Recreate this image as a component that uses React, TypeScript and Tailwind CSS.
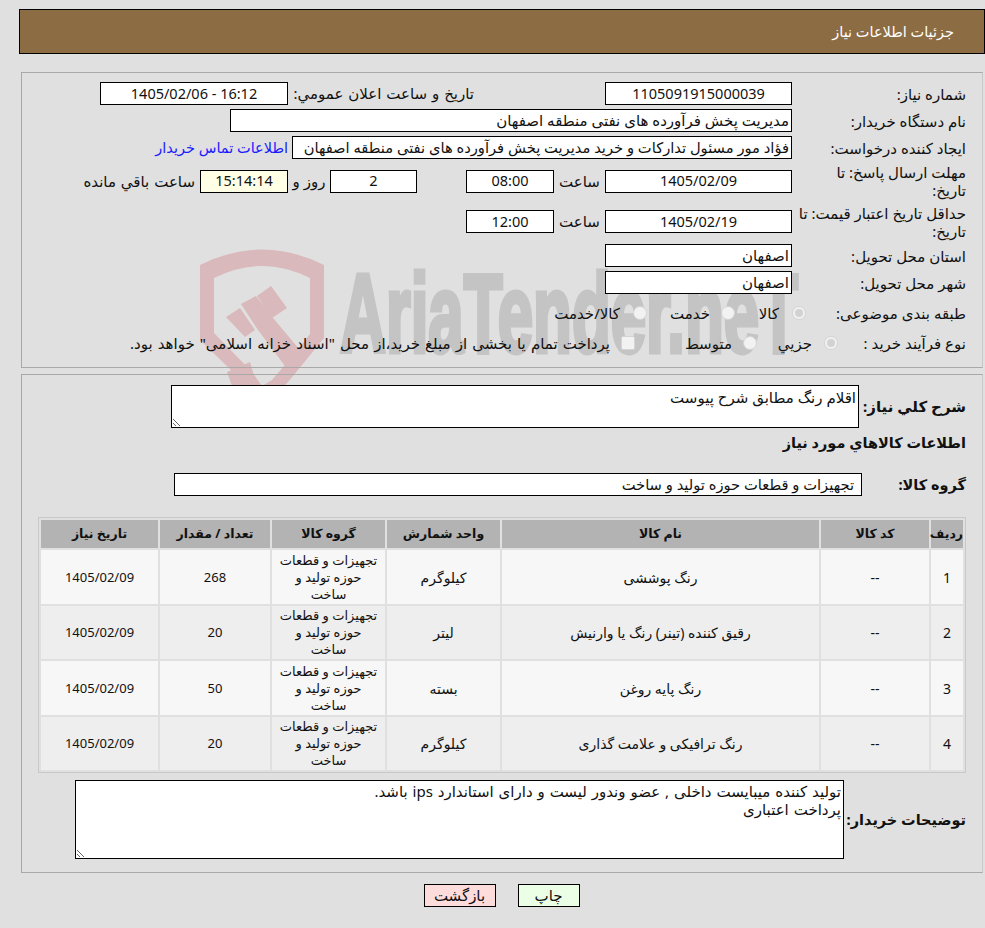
import React from "react";

function Field({ w, children, cls = "", bg = "bg-white" }: { w: string; children: React.ReactNode; cls?: string; bg?: string }) {
  return (
    <div className={`${w} ${bg} h-[23px] border border-black flex items-center px-[2px] overflow-hidden whitespace-nowrap shrink-0 ${cls}`}>
      {children}
    </div>
  );
}

function Num({ w, children, bg }: { w: string; children: React.ReactNode; bg?: string }) {
  return (
    <Field w={w} bg={bg} cls="justify-center text-[14.5px]">
      <span dir="ltr">{children}</span>
    </Field>
  );
}

function Label({ children, w = "w-[174px]" }: { children: React.ReactNode; w?: string }) {
  return <div className={`${w} shrink-0 leading-[18px] whitespace-nowrap`}>{children}</div>;
}

function Radio({ label, w, on = false, gap = "mr-[12px]" }: { label: string; w: string; on?: boolean; gap?: string }) {
  return (
    <div className={`${w} flex items-center shrink-0`}>
      <span className="w-[14px] h-[14px] rounded-full bg-[#f2f2f2] border border-[#d4d4d4] flex items-center justify-center shrink-0">
        {on && <span className="w-[8px] h-[8px] rounded-full bg-[#d2d2d2]" />}
      </span>
      <span className={`${gap} whitespace-nowrap`}>{label}</span>
    </div>
  );
}

function Watermark() {
  return (
    <svg className="absolute left-0 top-0 pointer-events-none" width="985" height="420" viewBox="0 0 985 420">
      <path
        fillRule="evenodd"
        fill="#d9b9bb"
        d="M200 265 Q262 234 324 265 L324 338 L293 376 L274 398 L262 400 L200 340 Z M214 278 L214 333 L252 372 L262 386 L272 380 L296 352 L310 334 L310 278 Q262 254 214 278 Z"
      />
      <path fill="#d9b9bb" d="M226 317 L240 308 L255 330 L245 337 Z M241 304 L256 296 L273 318 L258 330 Z M257 296 L271 286 L287 308 L272 318 Z M258 330 L273 318 L300 350 L293 374 L285 366 Z M227 372 L250 362 L257 386 L232 386 Z" />
      <text
        x="340"
        y="352"
        fill="#c4c4c4"
        stroke="#c4c4c4"
        strokeWidth="5"
        fontFamily="Liberation Sans, sans-serif"
        fontWeight="700"
        fontSize="112"
        textLength="458"
        lengthAdjust="spacingAndGlyphs"
        direction="ltr"
      >
        AriaTender.neT
      </text>
    </svg>
  );
}

const rows = [
  ["1", "--", "رنگ پوششی", "کیلوگرم", "268", "bg-[#f7f7f7]", "h-[54px]"],
  ["2", "--", "رقیق کننده (تینر) رنگ یا وارنیش", "لیتر", "20", "bg-[#eeeeee]", "h-[53px]"],
  ["3", "--", "رنگ پایه روغن", "بسته", "50", "bg-[#f7f7f7]", "h-[54px]"],
  ["4", "--", "رنگ ترافیکی و علامت گذاری", "کیلوگرم", "20", "bg-[#eeeeee]", "h-[53px]"],
];

const th = "bg-[#b3b3b3] font-bold text-[12.5px] h-[28px] p-0 text-center";
const td = "text-center p-0 text-[14px] leading-[17px]";
const tdSmall = "text-center p-0 text-[13px] leading-[17px]";

export default function App() {
  return (
    <div dir="rtl" className="relative w-[985px] h-[928px] bg-[#e0e0e0] text-[15px] text-[#111] overflow-hidden pt-[9px] pl-[19px]" style={{ fontFamily: '"Noto Sans","DejaVu Sans",sans-serif' }}>
      <Watermark />
      <div className="relative h-[45px] bg-[#8c6c42] border border-black text-white flex items-center pr-[30px] text-[14.5px]">
        جزئیات اطلاعات نیاز
      </div>

      <div className="relative mt-[18px] mr-[2px] ml-[2px] h-[296px] border border-[#a8a8a8] border-r-[#c8c8c8] pt-[9px] pr-[16px] flex flex-col">
        <div className="flex items-center h-[23px]">
          <Label>شماره نیاز:</Label>
          <Num w="w-[187px]">1105091915000039</Num>
          <div className="mr-[131px] w-[186px] shrink-0 whitespace-nowrap [word-spacing:1px]">تاریخ و ساعت اعلان عمومي:</div>
          <Num w="w-[188px]">1405/02/06 - 16:12</Num>
        </div>
        <div className="flex items-center h-[23px] mt-[4px]">
          <Label>نام دستگاه خریدار:</Label>
          <Field w="w-[562px]">مدیریت پخش فرآورده های نفتی منطقه اصفهان</Field>
        </div>
        <div className="flex items-center h-[23px] mt-[4px]">
          <Label>ایجاد کننده درخواست:</Label>
          <Field w="w-[500px]" cls="text-[14.7px]">فؤاد مور مسئول تدارکات و خرید مدیریت پخش فرآورده های نفتی منطقه اصفهان</Field>
          <a className="mr-[4px] text-[#1a1aff] whitespace-nowrap text-[14.5px]">اطلاعات تماس خریدار</a>
        </div>
        <div className="flex items-center h-[36px] mt-[4px]">
          <Label>مهلت ارسال پاسخ: تا<br />تاریخ:</Label>
          <Num w="w-[187px]">1405/02/09</Num>
          <div className="w-[51px] text-center shrink-0">ساعت</div>
          <Num w="w-[88px]">08:00</Num>
          <div className="w-[49px] shrink-0" />
          <Num w="w-[87px]">2</Num>
          <div className="w-[42px] text-center shrink-0">روز و</div>
          <Num w="w-[88px]" bg="bg-[#ffffe6]">15:14:14</Num>
          <div className="mr-[5px] whitespace-nowrap [word-spacing:1px]">ساعت باقي مانده</div>
        </div>
        <div className="flex items-center h-[37px] mt-[4px]">
          <Label>حداقل تاریخ اعتبار قیمت: تا<br />تاریخ:</Label>
          <Num w="w-[187px]">1405/02/19</Num>
          <div className="w-[51px] text-center shrink-0">ساعت</div>
          <Num w="w-[88px]">12:00</Num>
        </div>
        <div className="flex items-center h-[23px] mt-[4px]">
          <Label>استان محل تحویل:</Label>
          <Field w="w-[187px]">اصفهان</Field>
        </div>
        <div className="flex items-center h-[23px] mt-[4px]">
          <Label>شهر محل تحویل:</Label>
          <Field w="w-[187px]">اصفهان</Field>
        </div>
        <div className="flex items-center h-[30px] mt-[4px]">
          <Label w="w-[160px]">طبقه بندی موضوعی:</Label>
          <Radio label="کالا" w="w-[71px]" on gap="mr-[13px]" />
          <Radio label="خدمت" w="w-[88px]" gap="mr-[11px]" />
          <Radio label="کالا/خدمت" w="w-[100px]" gap="mr-[13px]" />
        </div>
        <div className="flex items-center h-[30px]">
          <Label w="w-[128px]">نوع فرآیند خرید :</Label>
          <Radio label="جزیي" w="w-[81px]" on gap="mr-[12px]" />
          <Radio label="متوسط" w="w-[122px]" gap="mr-[11px]" />
          <div className="flex items-center">
            <span className="w-[14px] h-[14px] rounded-[2px] bg-[#f2f2f2] border border-[#d4d4d4] shrink-0" />
            <span className="mr-[11px] whitespace-nowrap [word-spacing:1.2px]">پرداخت تمام یا بخشی از مبلغ خرید،از محل "اسناد خزانه اسلامی" خواهد بود.</span>
          </div>
        </div>
      </div>

      <div className="relative mt-[6px] mr-[2px] ml-[2px] h-[499px] border border-[#a8a8a8] border-r-[#c8c8c8] pr-[16px] pt-[9px] flex flex-col">
        <div className="flex items-center h-[44px]">
          <div className="w-[107px] shrink-0 font-bold whitespace-nowrap">شرح کلي نیاز:</div>
          <textarea readOnly dir="rtl" defaultValue="اقلام رنگ مطابق شرح پیوست" className="w-[688px] h-[43px] bg-white border border-black px-[2px] pt-[2px] text-[15px] leading-[18px] block outline-none" />
        </div>
        <div className="h-[30px] flex items-center font-bold text-[14.5px]">اطلاعات کالاهاي مورد نیاز</div>
        <div className="flex items-center h-[23px] mt-[15px]">
          <div className="w-[104px] shrink-0 font-bold text-[14.5px] whitespace-nowrap">گروه کالا:</div>
          <Field w="w-[688px]" cls="pr-[7px] text-[14.7px]">تجهیزات و قطعات حوزه تولید و ساخت</Field>
        </div>
        <table className="mt-[21px] w-[928px] table-fixed border border-[#c8c8c8] border-separate border-spacing-[2px] bg-[#e0e0e0]">
          <thead>
            <tr>
              <th className={`${th} w-[32px]`}>ردیف</th>
              <th className={`${th} w-[108px]`}>کد کالا</th>
              <th className={`${th} w-[317px]`}>نام کالا</th>
              <th className={`${th} w-[113px]`}>واحد شمارش</th>
              <th className={`${th} w-[113px]`}>گروه کالا</th>
              <th className={`${th} w-[110px]`}>تعداد / مقدار</th>
              <th className={th}>تاریخ نیاز</th>
            </tr>
          </thead>
          <tbody>
            {rows.map((r) => (
              <tr key={r[0]} className={`${r[5]} ${r[6]}`}>
                <td className={td}>{r[0]}</td>
                <td className={td}>{r[1]}</td>
                <td className={td}>{r[2]}</td>
                <td className={td}>{r[3]}</td>
                <td className={tdSmall}>
                  تجهیزات و قطعات
                  <br />
                  حوزه تولید و
                  <br />
                  ساخت
                </td>
                <td className={tdSmall}>{r[4]}</td>
                <td className={tdSmall}>1405/02/09</td>
              </tr>
            ))}
          </tbody>
        </table>
        <div className="flex items-center mt-[7px]">
          <div className="w-[122px] shrink-0 font-bold text-[14.5px] whitespace-nowrap">توضیحات خریدار:</div>
          <textarea readOnly dir="rtl" defaultValue={"تولید کننده میبایست داخلی , عضو وندور لیست و دارای استاندارد ips باشد.\nپرداخت اعتباری"} className="w-[769px] h-[79px] bg-white border border-black px-[2px] pt-[1px] text-[15px] leading-[18px] [word-spacing:1px] block outline-none" />
        </div>
      </div>

      <div className="relative mt-[11px] flex justify-center gap-[22px] pr-[1px]">
        <button className="w-[62px] h-[23px] bg-[#eaffe6] border border-black flex items-center justify-center">چاپ</button>
        <button className="w-[72px] h-[23px] bg-[#ffdcdc] border border-black flex items-center justify-center">بازگشت</button>
      </div>
    </div>
  );
}
